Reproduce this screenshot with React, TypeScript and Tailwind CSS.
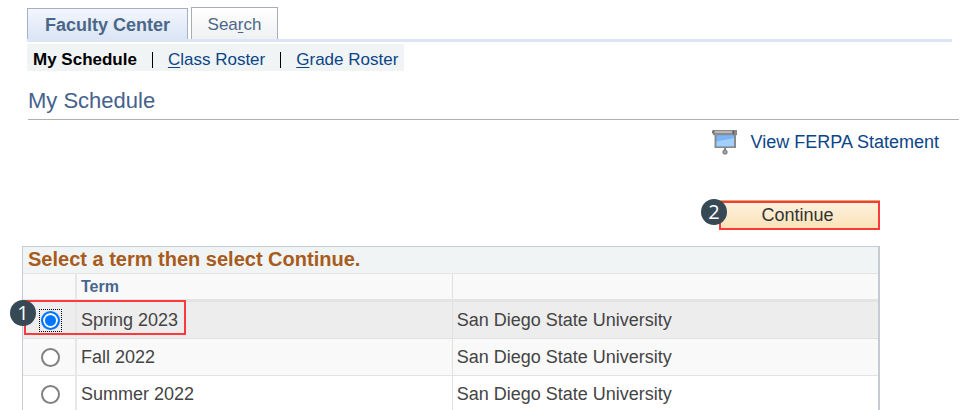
import { useState } from "react"

type Term = {
  id: string
  name: string
  institution: string
}

const terms: Term[] = [
  { id: "spring-2023", name: "Spring 2023", institution: "San Diego State University" },
  { id: "fall-2022", name: "Fall 2022", institution: "San Diego State University" },
  { id: "summer-2022", name: "Summer 2022", institution: "San Diego State University" },
]

function StepBadge({ step, className }: { step: number; className: string }) {
  return (
    <span
      className={`absolute flex h-[26px] w-[26px] items-center justify-center rounded-full bg-[#364954] font-['Open_Sans',sans-serif] text-[20px] leading-none text-white ${className}`}
    >
      {step}
    </span>
  )
}

function ProjectorIcon() {
  return (
    <svg width="26" height="26" viewBox="0 0 26 26" aria-hidden="true">
      <path d="M13 19v4" stroke="#858585" strokeWidth="2" />
      <circle cx="13" cy="23" r="1.8" fill="#b5b5b5" stroke="#858585" strokeWidth="1.6" />
      <rect x="2.5" y="5" width="21.5" height="14" fill="#8a8a8a" />
      <rect x="4.5" y="6" width="17.5" height="11.3" fill="#78b5f2" />
      <path d="M4.5 12.5L22 9v8.3H4.5z" fill="#a0d0fb" />
      <rect x="1" y="1" width="24" height="5.2" fill="#8b8b8b" />
      <path d="M3 3h17" stroke="#c9c9c9" strokeWidth="1.4" />
      <path d="M21.5 1.5v4" stroke="#606060" strokeWidth="1.6" />
      <path d="M0 3h2" stroke="#777" strokeWidth="3" />
    </svg>
  )
}

export default function MySchedule() {
  const [selected, setSelected] = useState(terms[0]!.id)

  return (
    <div className="h-screen overflow-hidden bg-white pl-[22px] pt-[7px] font-['Liberation_Sans',Arial,sans-serif] text-[18px] leading-6 text-[#444]">
      {/* Tabs */}
      <nav className="ml-[5px] mr-[25px] flex items-end gap-[3px] border-b-[3px] border-[#dbe5f4]">
        <a
          href="#faculty"
          className="flex h-[31px] w-[161px] items-center justify-center border border-b-0 border-[#a3b0c6] bg-gradient-to-b from-[#f3f6fd] to-[#dae5f5] pt-px font-bold text-[#4b6788]"
        >
          Faculty Center
        </a>
        <a
          href="#search"
          className="flex h-8 w-[87px] items-center justify-center border border-b-0 border-[#a5adba] bg-gradient-to-b from-white to-[#eff0f2] pt-[2px] text-[17px] text-[#4b6788]"
        >
          <span>
            Sea<u className="underline-offset-2">r</u>ch
          </span>
        </a>
      </nav>

      {/* Sub navigation */}
      <nav className="ml-[5px] mt-[2px] flex h-[27px] w-fit items-center bg-[#f0f4f5] px-[6px] pt-1 text-[17px] text-[#0b4587]">
        <span className="font-bold text-black">My Schedule</span>
        <span className="mx-[15px] h-4 w-px bg-black" />
        <a href="#class-roster">
          <u className="underline-offset-2">C</u>lass Roster
        </a>
        <span className="mx-[15px] h-4 w-px bg-black" />
        <a href="#grade-roster">
          <u className="underline-offset-2">G</u>rade Roster
        </a>
      </nav>

      <h1 className="ml-[6px] mr-[18px] mt-4 border-b border-[#b0b0b0] pb-1 text-[22px] leading-7 text-[#45618c]">
        My Schedule
      </h1>

      <div className="mr-[38px] mt-[9px] flex items-center justify-end gap-[13px] text-[#0b4587]">
        <ProjectorIcon />
        <a href="#ferpa">View FERPA Statement</a>
      </div>

      <div className="mr-[97px]">
        <div className="mt-[45px] flex justify-end">
          <div className="relative border-t border-[#d9ae6a]">
            <button
              type="button"
              className="block h-[29px] w-[161px] border-2 border-[#fb3b3b] bg-gradient-to-b from-[#fdf0dc] to-[#fae3b8] pb-[2px] pr-1 leading-6 text-[#333]"
            >
              Continue
            </button>
            <StepBadge step={2} className="-left-[18px] -top-[2px]" />
          </div>
        </div>

        {/* Term list */}
        <section className="mt-4 border border-b-0 border-r-2 border-[#c5cad3]">
          <h2 className="h-[26px] bg-[#f0f4f5] pl-[5px] text-xl leading-6 font-bold text-[#a85b1b]">
            Select a term then select Continue.
          </h2>
          <table className="w-full table-fixed border-collapse text-left">
            <colgroup>
              <col className="w-[53px]" />
              <col className="w-[44%]" />
              <col />
            </colgroup>
            <thead>
              <tr className="h-[27px] border-t border-b-[3px] border-[#e4e4e4] bg-[#f9f9f9] text-base leading-5 text-[#45678c]">
                <th className="border-r-2 border-r-[#e7e7e7]" />
                <th className="border-r border-r-[#e0e0e0] px-1">Term</th>
                <th />
              </tr>
            </thead>
            <tbody>
              {terms.map((term, index) => (
                <tr
                  key={term.id}
                  className="h-[37px] border-b border-[#e2e2e2] first:h-[38px] first:bg-[#ededed] even:bg-[#f9f9f9]"
                >
                  <td className="relative border-r-2 border-r-[#e7e7e7] pl-4">
                    <span className="flex h-[23px] w-[23px] items-center justify-center border border-dotted border-transparent has-checked:border-black">
                      <input
                        type="radio"
                        id={term.id}
                        name="term"
                        checked={selected === term.id}
                        onChange={() => setSelected(term.id)}
                        className="h-[19px] w-[19px] appearance-none rounded-full border-2 border-[#808080] bg-white outline-none checked:border-[#0075ff] checked:bg-[#0075ff] checked:shadow-[inset_0_0_0_2px_white]"
                      />
                    </span>
                    {index === 0 && (
                      <>
                        <span className="pointer-events-none absolute -top-[2px] left-px h-[35px] w-[162px] border-2 border-[#fb3b3b]" />
                        <StepBadge step={1} className="-left-[13px] -top-[2px]" />
                      </>
                    )}
                  </td>
                  <td className="border-r border-r-[#e0e0e0] px-1">
                    <label htmlFor={term.id}>{term.name}</label>
                  </td>
                  <td className="px-1">{term.institution}</td>
                </tr>
              ))}
            </tbody>
          </table>
        </section>
      </div>
    </div>
  )
}
